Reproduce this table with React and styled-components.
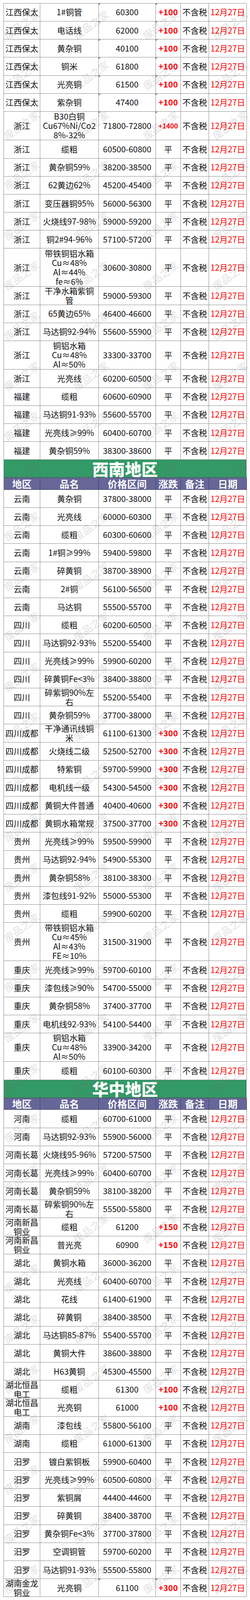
import React from 'react';
import styled, { createGlobalStyle } from 'styled-components';

const GlobalStyle = createGlobalStyle`
  html, body {
    margin: 0;
    padding: 0;
    background: #fff;
  }
  body {
    font-family: "Noto Sans CJK SC", "Noto Sans", sans-serif;
  }
`;

// the frame that gets photographed is about 4096px tall, so every vertical
// measure of the 4882px sheet is scaled by K to keep all rows in view
const K = 0.839;
const v = px => +(px * K).toFixed(2);

const COLS = '93px 150px 146px 64px 72px 97px';
const ROW_H = v(55.06);
const H3 = v(87.5);
const H4 = v(116.7);
const LINE_H = v(28.5);
const LINE_GRAY = '#8a8a8a';

const Page = styled.div`
  position: relative;
  width: 640px;
  overflow: hidden;
  box-sizing: border-box;
  padding: ${v(9.3)}px 9px 4px;
`;

const Table = styled.div`
  display: flex;
  flex-direction: column;
  border-left: 1px solid ${LINE_GRAY};
  border-top: 1px solid ${LINE_GRAY};
`;

const Row = styled.div`
  flex: none;
  display: grid;
  grid-template-columns: ${COLS};
  grid-template-rows: ${p => p.$h}px;
  height: ${p => p.$h}px;
`;

const Cell = styled.div`
  position: relative;
  box-sizing: border-box;
  min-height: 0;
  height: 100%;
  display: flex;
  flex-direction: column;
  align-items: center;
  justify-content: center;
  border-right: 1px solid ${LINE_GRAY};
  border-bottom: 1px solid ${LINE_GRAY};
  font-size: ${p => (p.$small ? 17 : 21)}px;
  line-height: ${LINE_H}px;
  font-weight: ${p => (p.$bold ? 700 : 400)};
  color: ${p => (p.$red ? '#ff0000' : '#111')};
  white-space: nowrap;
  text-align: center;

  ${p =>
    p.$tick
      ? `&::before {
    content: '';
    position: absolute;
    top: 0;
    left: 0;
    border-top: 4px solid #1f8f2a;
    border-right: 4px solid transparent;
  }`
      : ''}
`;

const Line = styled.span`
  display: block;
  height: ${LINE_H}px;
`;

const SectionBar = styled.div`
  flex: none;
  box-sizing: border-box;
  height: ${v(54.7)}px;
  display: flex;
  align-items: center;
  justify-content: center;
  background: #339966;
  border-right: 1px solid #4d4d4d;
  border-bottom: 1px solid #4d4d4d;
  color: #fff;
  font-size: 42px;
  line-height: ${v(54)}px;
  font-weight: 900;
`;

const HeadRow = styled.div`
  flex: none;
  display: grid;
  grid-template-columns: ${COLS};
  grid-template-rows: ${v(36.7)}px;
  height: ${v(36.7)}px;
  background: #666699;
`;

const HeadCell = styled.div`
  box-sizing: border-box;
  display: flex;
  align-items: center;
  justify-content: center;
  border-right: 1px solid #3e3e5e;
  border-bottom: 1px solid #3e3e5e;
  color: #fff;
  font-size: 25px;
  line-height: ${v(34)}px;
  font-weight: 700;
  white-space: nowrap;
`;

const Watermarks = styled.div`
  position: absolute;
  top: ${v(-1)}px;
  left: -34px;
  width: 712px;
  bottom: 0;
  overflow: hidden;
  display: grid;
  grid-template-columns: repeat(4, 178px);
  grid-auto-rows: ${v(153)}px;
  pointer-events: none;
`;

const Mark = styled.span`
  display: flex;
  align-items: center;
  justify-content: center;
  transform: rotate(-36deg);
  font-size: 26px;
  line-height: 30px;
  color: rgba(110, 110, 110, 0.22);
  white-space: nowrap;
`;

const r = (region, name, price, change = '平', extra = {}) => ({ region, name, price, change, ...extra });

const eastRows = [
  r('江西保太', '1#铜管', '60300', '+100', { tick: true }),
  r('江西保太', '电话线', '62000', '+100', { tick: true }),
  r('江西保太', '黄杂铜', '40100', '+100', { tick: true }),
  r('江西保太', '铜米', '61800', '+100', { tick: true }),
  r('江西保太', '光亮铜', '61500', '+100', { tick: true }),
  r('江西保太', '紫杂铜', '47400', '+100', { tick: true }),
  r('浙江', ['B30白铜', 'Cu67%Ni/Co2', '8%-32%'], '71800-72800', '+1400', { h: H3, small: true, tick: true }),
  r('浙江', '缆粗', '60500-60800'),
  r('浙江', '黄杂铜59%', '38200-38500'),
  r('浙江', '62黄边62%', '45200-45400'),
  r('浙江', '变压器铜95%', '56000-56300'),
  r('浙江', '火烧线97-98%', '59000-59200'),
  r('浙江', '铜2#94-96%', '57100-57200'),
  r('浙江', ['带铁铜铝水箱', 'Cu≈48%', 'Al≈44%', 'fe≈6%'], '30600-30800', '平', { h: H4 }),
  r('浙江', ['干净水箱紫铜', '管'], '59000-59300'),
  r('浙江', '65黄边65%', '46400-46600'),
  r('浙江', '马达铜92-94%', '55600-55900'),
  r('浙江', ['铜铝水箱', 'Cu≈48%', 'Al≈50%'], '33300-33700', '平', { h: H3 }),
  r('浙江', '光亮线', '60200-60500'),
  r('福建', '缆粗', '60600-60900'),
  r('福建', '马达铜91-93%', '55600-55700'),
  r('福建', '光亮线≥99%', '60400-60700'),
  r('福建', '黄杂铜59%', '38300-38600'),
];

const southwestRows = [
  r('云南', '黄杂铜', '37800-38000'),
  r('云南', '光亮线', '60000-60300'),
  r('云南', '缆粗', '60300-60600'),
  r('云南', '1#铜≥99%', '59400-59800'),
  r('云南', '碎黄铜', '38700-38900'),
  r('云南', '2#铜', '56100-56500'),
  r('云南', '马达铜', '55500-55700'),
  r('四川', '缆粗', '60200-60500'),
  r('四川', '马达铜92-93%', '55200-55400'),
  r('四川', '光亮线≥99%', '59900-60200'),
  r('四川', '碎黄铜Fe<3%', '38400-38800'),
  r('四川', ['碎紫铜90%左', '右'], '55200-55400'),
  r('四川', '黄杂铜59%', '37700-38000'),
  r('四川成都', ['干净通讯线铜', '米'], '61100-61300', '+300'),
  r('四川成都', '火烧线二级', '52500-52700', '+300'),
  r('四川成都', '特紫铜', '59700-59900', '+300'),
  r('四川成都', '电机线一级', '54300-54500', '+300'),
  r('四川成都', '黄铜大件普通', '40400-40600', '+300'),
  r('四川成都', '黄铜水箱常规', '37500-37700', '+300'),
  r('贵州', '光亮线≥99%', '59500-59900'),
  r('贵州', '马达铜92-94%', '54900-55300'),
  r('贵州', '黄杂铜58%', '38100-38300'),
  r('贵州', '漆包线91-92%', '55000-55300'),
  r('贵州', '缆粗', '59900-60200'),
  r('贵州', ['带铁铜铝水箱', 'Cu≈45%', 'Al≈43%', 'FE≈10%'], '31500-31900', '平', { h: H4 }),
  r('重庆', '光亮线≥99%', '59700-60100'),
  r('重庆', '漆包线≥90%', '54700-55000'),
  r('重庆', '黄杂铜58%', '37400-37700'),
  r('重庆', '电机线92-93%', '54100-54400'),
  r('重庆', ['铜铝水箱', 'Cu≈48%', 'Al≈50%'], '33900-34200', '平', { h: H3 }),
  r('重庆', '缆粗', '60100-60300'),
];

const centralRows = [
  r('河南', '缆粗', '60700-61000'),
  r('河南', '马达铜92-93%', '55900-56000'),
  r('河南长葛', '火烧线95-96%', '57200-57500'),
  r('河南长葛', '光亮线≥99%', '60400-60700'),
  r('河南长葛', '黄杂铜59%', '38100-38200'),
  r('河南长葛', ['碎紫铜90%左', '右'], '55500-55800'),
  r(['河南新昌', '铜业'], '缆粗', '61200', '+150'),
  r(['河南新昌', '铜业'], '普光亮', '60900', '+150'),
  r('湖北', '黄铜水箱', '36000-36200'),
  r('湖北', '光亮线', '60400-60700'),
  r('湖北', '花线', '61400-61900'),
  r('湖北', '碎黄铜', '38400-38500'),
  r('湖北', '马达铜85-87%', '55400-55700'),
  r('湖北', '黄铜大件', '38600-38800'),
  r('湖北', 'H63黄铜', '45300-45500'),
  r(['湖北恒昌', '电工'], '缆粗', '61300', '+100'),
  r(['湖北恒昌', '电工'], '光亮铜', '61000', '+100'),
  r('湖南', '漆包线', '55800-56100'),
  r('湖南', '缆粗', '61000-61300'),
  r('汨罗', '镀白紫铜板', '59900-60400'),
  r('汨罗', '光亮线≥99%', '60500-60800'),
  r('汨罗', '紫铜屑', '44400-44600'),
  r('汨罗', '碎黄铜', '38400-38700'),
  r('汨罗', '黄杂铜Fe<3%', '37700-37800'),
  r('汨罗', '空调铜管', '59700-60200'),
  r('汨罗', '马达铜91-93%', '55500-55800'),
  r(['湖南金龙', '铜业'], '光亮铜', '61100', '+300', { tick: true }),
];

const HEADINGS = ['地区', '品名', '价格区间', '涨跌', '备注', '日期'];

const lines = val => (Array.isArray(val) ? val : [val]).map((t, i) => <Line key={i}>{t}</Line>);

const PriceRow = ({ row }) => {
  const up = row.change !== '平';
  return (
    <Row $h={row.h || ROW_H}>
      <Cell>{lines(row.region)}</Cell>
      <Cell>{lines(row.name)}</Cell>
      <Cell $tick={row.tick}>{lines(row.price)}</Cell>
      <Cell $tick={row.tick} $red={up} $bold={up} $small={row.small}>
        {lines(row.change)}
      </Cell>
      <Cell>{lines('不含税')}</Cell>
      <Cell $red>{lines('12月27日')}</Cell>
    </Row>
  );
};

const Section = ({ title, rows }) => (
  <>
    <SectionBar>{title}</SectionBar>
    <HeadRow>
      {HEADINGS.map(h => (
        <HeadCell key={h}>{h}</HeadCell>
      ))}
    </HeadRow>
    {rows.map((row, i) => (
      <PriceRow key={i} row={row} />
    ))}
  </>
);

export default function App() {
  const marks = Array.from({ length: 32 * 4 });
  return (
    <Page>
      <GlobalStyle />
      <Table>
        {eastRows.map((row, i) => (
          <PriceRow key={i} row={row} />
        ))}
        <Section title="西南地区" rows={southwestRows} />
        <Section title="华中地区" rows={centralRows} />
      </Table>
      <Watermarks>
        {marks.map((_, i) => (
          <Mark key={i}>废品之家</Mark>
        ))}
      </Watermarks>
    </Page>
  );
}
